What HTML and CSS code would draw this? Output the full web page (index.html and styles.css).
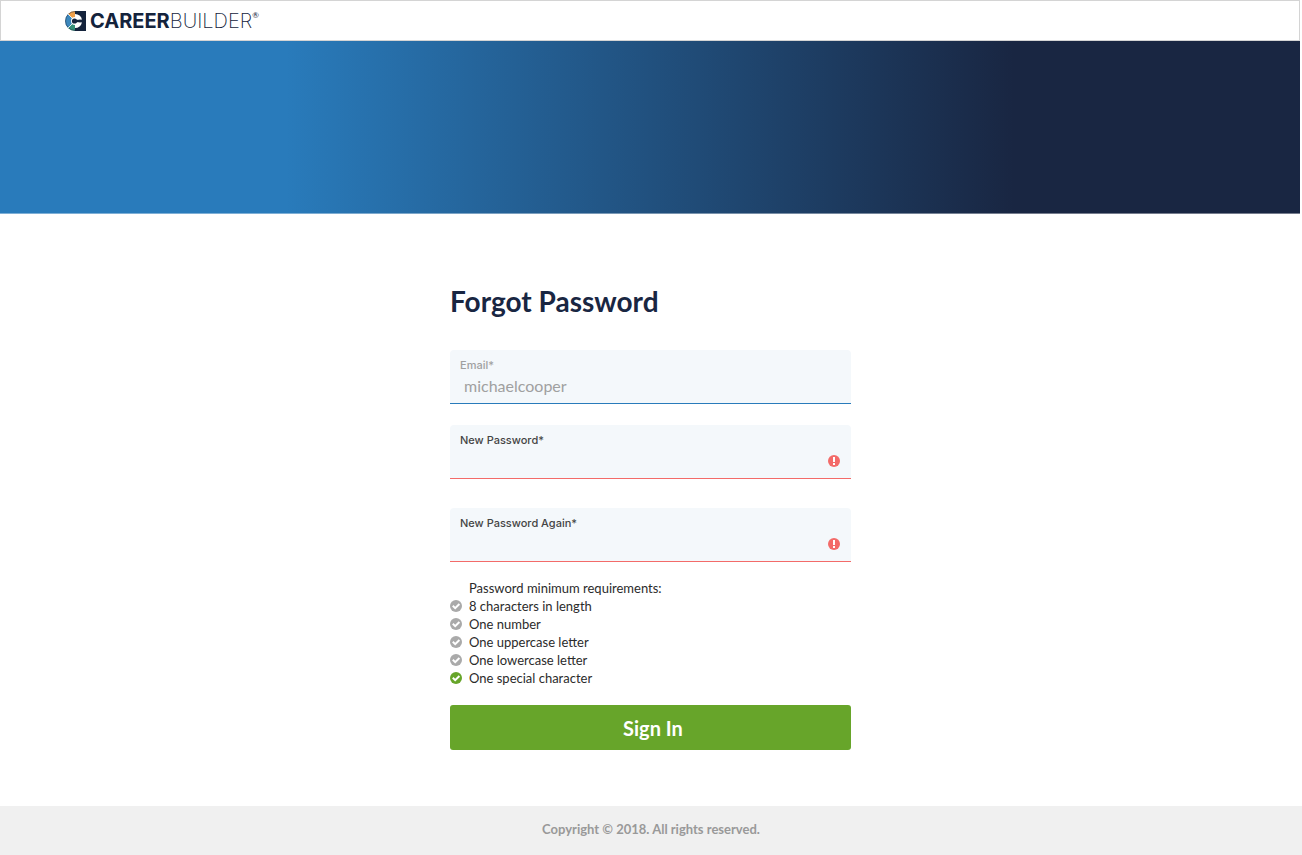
FILE: index.html
```html
<!DOCTYPE html>
<html lang="en">
<head>
  <meta charset="UTF-8" />
  <meta name="viewport" content="width=device-width, initial-scale=1.0"/>
  <title>Forgot Password</title>
  <link rel="stylesheet" href="styles.css">
</head>
<body>
  <!-- shared icons -->
  <svg class="sprite" aria-hidden="true">
    <symbol id="icon-check" viewBox="0 0 12 12">
      <circle cx="6" cy="6" r="6" fill="currentColor"/>
      <path d="M2.800 5.800l2.400 2.400L9.400 4" fill="none" stroke="#fff" stroke-width="2"/>
    </symbol>
    <symbol id="icon-error" viewBox="0 0 12 12">
      <circle cx="6" cy="6" r="6" fill="currentColor"/>
      <path d="M5 2h2v5H5zM5 8h2v2H5z" fill="#fff"/>
    </symbol>
  </svg>

  <header class="header">
    <a class="logo" href="#" aria-label="CareerBuilder">
      <svg class="logo-mark" viewBox="0 0 21 20" aria-hidden="true">
        <path d="M10 0h11v20H10z" fill="#14233c"/>
        <path d="M10 0A10 10 0 0 0 3 3l7 7z" fill="#f0a049"/>
        <path d="M3 3a10 10 0 0 0 0 14l7-7z" fill="#3c88bd"/>
        <path d="M3 17a10 10 0 0 0 7 3V10z" fill="#359078"/>
        <path d="M10 .5a9.500 9.500 0 0 0 0 19" fill="none" stroke="#14233c" stroke-width="1" opacity=".5"/>
        <path d="M3 3l5 5M3 17l5-5" stroke="#fff" stroke-width=".8"/>
        <path d="M10 3a7 7 0 0 1 7 5.800h-7zM10 17a7 7 0 0 0 7-5.800h-7z" fill="#fff"/>
        <circle cx="10" cy="10" r="4" fill="#fff"/>
        <path d="M10 8.800h11v2.400H10z" fill="#14233c"/>
        <circle cx="9.500" cy="10" r="2.600" fill="#14233c"/>
      </svg>
      <span class="logo-text"><b>CAREER</b>BUILDER</span><span class="logo-reg">®</span>
    </a>
  </header>
  <div class="banner"></div>

  <main class="main">
    <form class="form">
      <h1>Forgot Password</h1>

      <div class="field field-disabled">
        <label for="email">Email*</label>
        <input type="text" id="email" value="michaelcooper" disabled>
      </div>

      <div class="field field-error">
        <label for="newPassword">New Password*</label>
        <input type="password" id="newPassword">
        <svg class="icon field-icon"><use href="#icon-error"/></svg>
      </div>

      <div class="field field-error">
        <label for="newPasswordAgain">New Password Again*</label>
        <input type="password" id="newPasswordAgain">
        <svg class="icon field-icon"><use href="#icon-error"/></svg>
      </div>

      <div class="requirements">
        <p>Password minimum requirements:</p>
        <ul>
          <li><svg class="icon"><use href="#icon-check"/></svg>8 characters in length</li>
          <li><svg class="icon"><use href="#icon-check"/></svg>One number</li>
          <li><svg class="icon"><use href="#icon-check"/></svg>One uppercase letter</li>
          <li><svg class="icon"><use href="#icon-check"/></svg>One lowercase letter</li>
          <li class="met"><svg class="icon"><use href="#icon-check"/></svg>One special character</li>
        </ul>
      </div>

      <button type="submit" class="button">Sign In</button>
    </form>
  </main>

  <footer class="footer">Copyright © 2018. All rights reserved.</footer>
</body>
</html>
```

FILE: styles.css
```css
* {
  box-sizing: border-box;
}

body {
  margin: 0;
  min-height: 100vh;
  display: flex;
  flex-direction: column;
  font-family: Lato, sans-serif;
  background-color: #fff;
  color: #2b2b2b;
}

.sprite {
  display: none;
}

.icon {
  width: 12px;
  height: 12px;
  flex: none;
}

.header {
  display: flex;
  align-items: center;
  height: 41px;
  margin-right: 2px;
  padding: 0 64px;
  border: 1px solid #d4d4d4;
}

.logo {
  display: flex;
  align-items: center;
  color: #14233c;
  text-decoration: none;
}

.logo-mark {
  width: 21px;
  height: 20px;
  margin-right: 4px;
}

.logo-text {
  font-family: Inter, sans-serif;
  font-size: 20px;
  line-height: 20px;
  font-weight: 200;
}

.logo-text b {
  font-weight: 700;
}

.logo-reg {
  align-self: flex-start;
  font-size: 8px;
  line-height: 8px;
}

.banner {
  height: 173px;
  margin-right: 2px;
  background: linear-gradient(90deg, #297bbb 22%, #192642 78%);
  border-bottom: 1px solid rgba(255, 255, 255, 0.4);
}

.main {
  flex: 1;
  padding: 69px 1px 56px 0;
}

.form {
  max-width: 401px;
  margin: 0 auto;
}

h1 {
  margin: 0 0 31px;
  font-size: 28px;
  line-height: 36px;
  color: #192642;
}

.field {
  position: relative;
  height: 54px;
  margin-bottom: 21px;
  padding: 8px 10px 0;
  background-color: #f4f8fb;
  border-bottom: 1px solid #297bbb;
  border-radius: 4px 4px 0 0;
}

.field label {
  display: block;
  font-family: Inter, sans-serif;
  font-size: 11px;
  line-height: 14px;
  font-weight: 500;
  color: #444;
}

.field input {
  display: block;
  width: 100%;
  height: 26px;
  padding: 0 4px;
  border: none;
  outline: none;
  background: none;
  font-family: inherit;
  font-size: 16px;
  color: #2b2b2b;
}

.field-disabled label,
.field-disabled input {
  color: #a0a0a0;
}

.field-error {
  margin-bottom: 29px;
  border-bottom-color: #f36b69;
}

.field-error + .field-error {
  margin-bottom: 17px;
}

.field-icon {
  position: absolute;
  right: 11px;
  bottom: 11px;
  color: #f36b69;
}

.requirements {
  margin-bottom: 18px;
  font-size: 13px;
  line-height: 18px;
}

.requirements p {
  margin: 0;
  padding-left: 19px;
}

.requirements ul {
  margin: 0;
  padding: 0;
  list-style: none;
}

.requirements li {
  display: flex;
  align-items: center;
  gap: 7px;
}

.requirements .icon {
  color: #aaa;
}

.requirements .met .icon {
  color: #67a52a;
}

.button {
  display: block;
  width: 100%;
  height: 45px;
  padding: 0 6px 0 11px;
  border: none;
  border-radius: 3px;
  background-color: #67a52a;
  color: #fff;
  font-family: inherit;
  font-size: 20px;
  font-weight: bold;
  cursor: pointer;
}

.button:hover {
  background-color: #5b9424;
}

.footer {
  padding: 14px 0 17px;
  background-color: #f0f0f0;
  color: #999;
  font-size: 13px;
  line-height: 18px;
  font-weight: bold;
  text-align: center;
}
```
